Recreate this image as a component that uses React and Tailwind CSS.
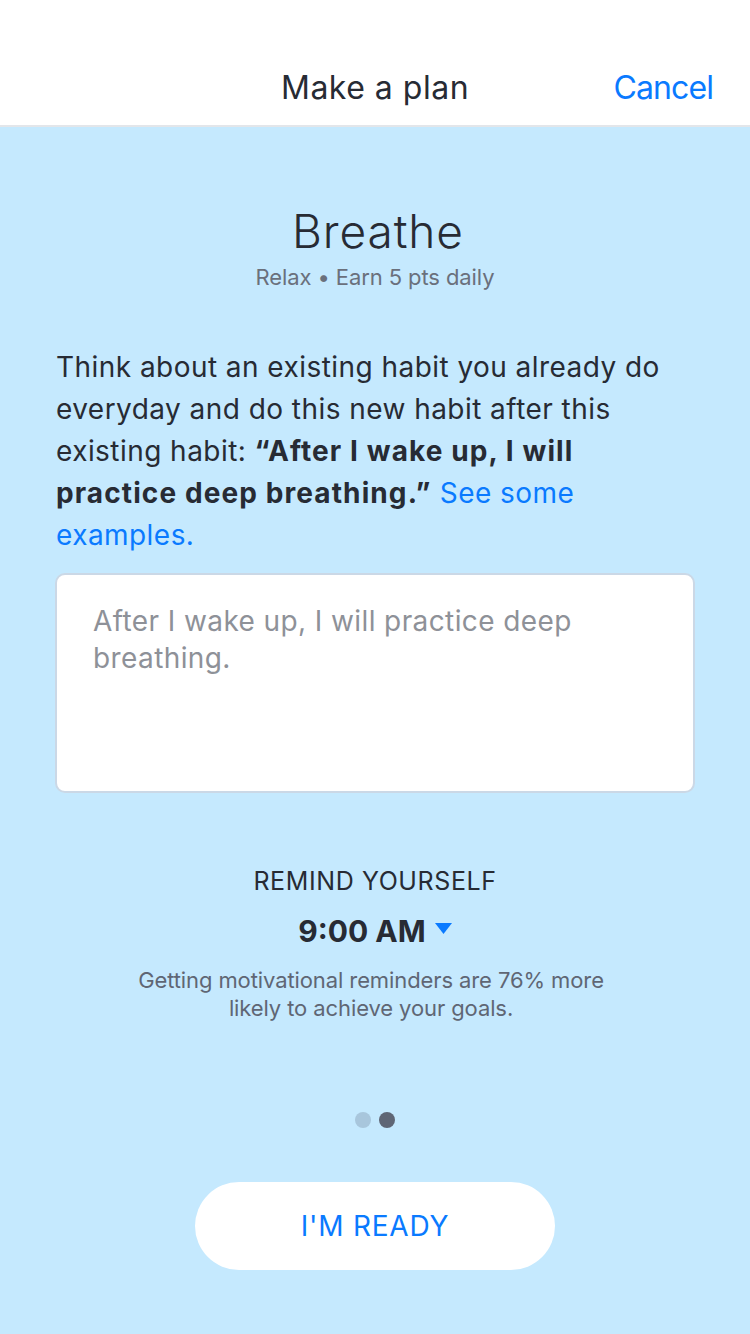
import React from "react";

export default function App() {
  return (
    <div className="w-[750px] h-[1334px] flex flex-col bg-[#c5e9fe] text-[#272b34]" style={{ fontFamily: "Inter, 'Noto Sans', sans-serif" }}>
      <header className="h-[127px] bg-white border-b-2 border-[#e3e6ea] relative flex items-end justify-center pb-[17px] shrink-0">
        <div className="text-[32px] leading-[40px] text-[#272b34] tracking-[0.5px]">Make a plan</div>
        <div className="absolute right-[37px] bottom-[17px] text-[32px] leading-[40px] text-[#0a7aff] tracking-[-0.9px]">Cancel</div>
      </header>

      <main className="flex flex-col items-center px-[56px]">
        <h1 className="mt-[77px] ml-[6px] text-[46px] leading-[54px] font-light tracking-[0.9px]">Breathe</h1>
        <div className="mt-[5px] text-[22px] leading-[28px] text-[#6a707c] tracking-[-0.1px]">Relax • Earn 5 pts daily</div>

        <p className="mt-[55px] self-stretch text-[28px] leading-[42px] tracking-[0.45px]">
          Think about an existing habit you already do everyday and do this new habit after this existing habit:{" "}
          <span className="font-bold tracking-[1.1px]">“After I wake up, I will practice deep breathing.”</span>{" "}
          <span className="text-[#0a7aff]">See some examples.</span>
        </p>

        <div className="mt-[17px] w-[640px] h-[220px] bg-white border-2 border-[#cbd8e6] rounded-[10px] px-[36px] pt-[28px]">
          <div className="text-[28px] leading-[37px] text-[#8e9198] tracking-[0.4px] pr-[60px]">
            After I wake up, I will practice deep breathing.
          </div>
        </div>

        <div className="mt-[72px] text-[25px] leading-[32px] tracking-[0.6px]">REMIND YOURSELF</div>
        <div className="mt-[16px] flex items-center gap-[9px]">
          <span className="text-[30px] leading-[36px] font-bold">9:00 AM</span>
          <svg width="17" height="12" viewBox="0 0 17 12" className="mt-[-4px]">
            <polygon points="0,0 17,0 8.5,11" fill="#0a7aff" />
          </svg>
        </div>
        <div className="mt-[17px] text-[22px] leading-[28px] text-[#5f6674] text-center tracking-[-0.1px] w-[500px] mr-[8px]">
          Getting motivational reminders are 76% more likely to achieve your goals.
        </div>

        <div className="mt-[90px] flex gap-[8px]">
          <div className="w-[16px] h-[16px] rounded-full bg-[#a8c6dc]" />
          <div className="w-[16px] h-[16px] rounded-full bg-[#5f6675]" />
        </div>

        <button className="mt-[54px] w-[360px] h-[88px] rounded-full bg-white text-[#0a7aff] text-[28px] tracking-[0.8px]">
          I'M READY
        </button>
      </main>
    </div>
  );
}
